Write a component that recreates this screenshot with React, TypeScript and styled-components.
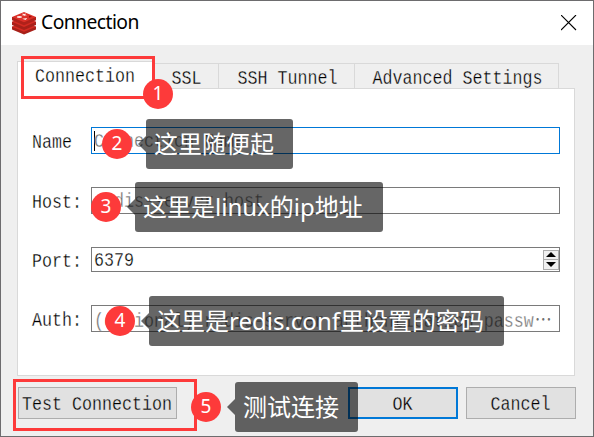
import React from "react";
import styled, { createGlobalStyle, css } from "styled-components";

const GlobalStyle = createGlobalStyle`
  * { box-sizing: border-box; }
  body { margin: 0; overflow: hidden; background: #efefef; }
`;

const Dialog = styled.div`
  position: relative;
  display: flex;
  flex-direction: column;
  width: 594px;
  height: 437px;
  border: 1px solid #6d6c6e;
  background: #efefef;
  color: #000;
`;

const TitleBar = styled.header`
  display: flex;
  align-items: center;
  height: 44px;
  flex: none;
  padding: 0 16px 0 10px;
  background: #fff;
`;

const Title = styled.h1`
  flex: 1;
  margin: 0 0 0 4px;
  font: 400 19.3px/42px "Noto Sans", "Open Sans", sans-serif;
  letter-spacing: -0.55px;
  padding-bottom: 2px;
`;

/* Tall fixed-pitch face: every character is 10px wide.
   A hairline stroke in the surface colour keeps the stems light. */
const Mono = styled.span<{ $muted?: boolean; $surface?: string }>`
  display: inline-block;
  flex: none;
  font: 400 16.667px/24px "Liberation Mono", "Noto Sans CJK SC", monospace;
  transform: scaleY(1.17);
  white-space: pre;
  color: ${(p) => (p.$muted ? "#707070" : "#000")};
  -webkit-text-stroke: 0.25px ${(p) => p.$surface ?? "#fff"};
`;

const Ellipsis = styled.span`
  display: inline-block;
  margin-left: 1px;
  font: 400 17px/24px "Noto Sans CJK SC", sans-serif;
  -webkit-text-stroke: 0;
`;

const Tabs = styled.nav`
  display: flex;
  align-items: flex-end;
  height: 27px;
  margin: 16px 0 0 16px;
  flex: none;
`;

const Tab = styled.div<{ $width: number; $active?: boolean }>`
  display: flex;
  justify-content: center;
  align-items: center;
  width: ${(p) => p.$width}px;
  height: 25px;
  padding: 5px 0 0 2px;
  border: 1px solid #d9d9d9;
  border-width: 1px 1px 0 0;
  ${(p) =>
    p.$active &&
    css`
      height: 28px;
      padding: 2px 0 0 0;
      margin-bottom: -1px;
      border-left-width: 1px;
      background: #fff;
      z-index: 1;
    `}
`;

const Panel = styled.main`
  display: flex;
  flex-direction: column;
  width: 558px;
  height: 288px;
  flex: none;
  margin-left: 16px;
  padding: 38px 14px 0 14px;
  border: 1px solid #d9d9d9;
  background: #fff;
`;

const Field = styled.label<{ $gap: number }>`
  display: flex;
  align-items: center;
  margin-bottom: ${(p) => p.$gap}px;
`;

const FieldName = styled.div`
  display: flex;
  width: 59px;
  padding-top: 2px;
  margin-bottom: -2px;
`;

const Input = styled.div<{ $focused?: boolean; $height?: number }>`
  display: flex;
  align-items: center;
  width: 469px;
  height: ${(p) => p.$height ?? 27}px;
  padding: 3px 0 0 2px;
  overflow: hidden;
  border: 1px solid ${(p) => (p.$focused ? "#0078d7" : "#7a7a7a")};
`;

const Caret = styled.i`
  width: 1px;
  height: 20px;
  margin: -3px -1px 0 0;
  flex: none;
  background: #000;
`;

const Spinner = styled.div`
  display: flex;
  flex-direction: column;
  width: 16px;
  height: 22px;
  margin: -3px 0 0 auto;
  padding: 1px 0;
`;

const Step = styled.div`
  display: flex;
  align-items: center;
  justify-content: center;
  height: 11px;
  border: 1px solid #acacac;
  background: #f0f0f0;
  & + & { margin-top: -1px; }
`;

const Footer = styled.footer`
  display: flex;
  gap: 8px;
  margin: 11px 17px 0;
`;

const Button = styled.button<{ $width?: number; $primary?: boolean }>`
  display: flex;
  align-items: center;
  justify-content: center;
  width: ${(p) => p.$width ?? 110}px;
  height: 32px;
  padding: 3px 1px 0 0;
  border: ${(p) => (p.$primary ? "2px solid #0078d7" : "1px solid #adadad")};
  background: #e1e1e1;
`;

const Spacer = styled.div`
  width: 155px;
`;

interface Spot {
  $x: number;
  $y: number;
}

/* Annotations float over the dialog at free positions */
const Frame = styled.div<Spot & { $w: number; $h: number }>`
  position: absolute;
  z-index: 2;
  left: ${(p) => p.$x - 1}px;
  top: ${(p) => p.$y - 1}px;
  width: ${(p) => p.$w}px;
  height: ${(p) => p.$h}px;
  border: 3px solid #fd3a3a;
`;

const Badge = styled.div<Spot>`
  position: absolute;
  z-index: 3;
  left: ${(p) => p.$x - 1}px;
  top: ${(p) => p.$y - 1}px;
  width: 30px;
  height: 30px;
  border-radius: 50%;
  background: #fd3a3a;
  color: #fff;
  font: 400 19px/29px "Noto Sans", "Open Sans", sans-serif;
  text-align: center;
`;

const Callout = styled.div<Spot & { $w: number }>`
  position: absolute;
  z-index: 3;
  left: ${(p) => p.$x - 1}px;
  top: ${(p) => p.$y - 1}px;
  width: ${(p) => p.$w}px;
  height: 50px;
  padding-left: 8px;
  border-radius: 3px;
  background: rgba(0, 0, 0, 0.6);
  color: #fff;
  font: 400 24px/50px "Noto Sans", "Noto Sans CJK SC", sans-serif;
  white-space: nowrap;
  &::before {
    content: "";
    position: absolute;
    left: -8px;
    top: 17px;
    border: 8px solid transparent;
    border-left-width: 0;
    border-right-color: rgba(0, 0, 0, 0.6);
  }
`;

const RedisLogo = () => (
  <svg width="26" height="24" viewBox="0 0 26 24">
    <path d="M1 15.5h24v3L13 23.4 1 18.5z" fill="#a82019" />
    <path d="M1 15.7 13 11l12 4.7-12 5.1z" fill="#d52b23" />
    <path d="M1 10.8h24v3.2l-12 5-12-5z" fill="#a82019" />
    <path d="M1 10.8 13 6l12 4.8-12 5.1z" fill="#d52b23" />
    <path d="M1 6h24v3.2l-12 5-12-5z" fill="#b0211a" />
    <path d="M1 6.1 13 1l12 5.1-12 5.2z" fill="#dc3028" />
    <path d="m11.3 2.6 1.8.5 1.8-.5-.6 1 1.6.6-2 .2-.7.7-.8-.8-1.8-.1 1.3-.6z" fill="#ffe9e7" />
    <ellipse cx="8.4" cy="5.9" rx="2.6" ry="1" fill="#ffe9e7" />
    <path d="m11.2 7.8 5-.7-1.5 2z" fill="#ffe9e7" />
    <path d="m18 4.5 3 1.2-3 1.1z" fill="#96120c" />
  </svg>
);

const CloseIcon = () => (
  <svg width="16" height="16" viewBox="0 0 16 16" stroke="#000" strokeWidth="1.1">
    <path d="m.5.5 15 15m0-15-15 15" transform="translate(-.5 -.5)" />
  </svg>
);

const Arrow = ({ down }: { down?: boolean }) => (
  <svg width="10" height="5" viewBox="0 0 10 5">
    <path d={down ? "M0 0h10L5 5z" : "M0 5h10L5 0z"} />
  </svg>
);

export default function App() {
  return (
    <>
      <GlobalStyle />
      <Dialog>
        <TitleBar>
          <RedisLogo />
          <Title>Connection</Title>
          <CloseIcon />
        </TitleBar>
        <Tabs>
          <Tab $width={136} $active><Mono>Connection</Mono></Tab>
          <Tab $width={66}><Mono $surface="#efefef">SSL</Mono></Tab>
          <Tab $width={136}><Mono $surface="#efefef">SSH Tunnel</Mono></Tab>
          <Tab $width={204}><Mono $surface="#efefef">Advanced Settings</Mono></Tab>
        </Tabs>
        <Panel>
          <Field $gap={33}>
            <FieldName><Mono>Name</Mono></FieldName>
            <Input $focused><Caret /><Mono $muted>Connection Name</Mono></Input>
          </Field>
          <Field $gap={33}>
            <FieldName><Mono>Host:</Mono></FieldName>
            <Input><Mono $muted>redis-server host</Mono></Input>
          </Field>
          <Field $gap={33}>
            <FieldName><Mono>Port:</Mono></FieldName>
            <Input $height={25}>
              <Mono>6379</Mono>
              <Spinner>
                <Step><Arrow /></Step>
                <Step><Arrow down /></Step>
              </Spinner>
            </Input>
          </Field>
          <Field $gap={0}>
            <FieldName><Mono>Auth:</Mono></FieldName>
            <Input>
              <Mono $muted>(optional) redis-server authentication passw<Ellipsis lang="zh-CN">⋯</Ellipsis></Mono>
            </Input>
          </Field>
        </Panel>
        <Footer>
          <Button $width={159}><Mono $surface="#e1e1e1">Test Connection</Mono></Button>
          <Spacer />
          <Button $primary><Mono $surface="#e1e1e1">OK</Mono></Button>
          <Button><Mono $surface="#e1e1e1">Cancel</Mono></Button>
        </Footer>

        <Frame $x={21} $y={56} $w={134} $h={43} />
        <Frame $x={13} $y={379} $w={184} $h={52} />
        <Badge $x={143} $y={79}>1</Badge>
        <Badge $x={102} $y={129}>2</Badge>
        <Badge $x={91} $y={192}>3</Badge>
        <Badge $x={105} $y={306}>4</Badge>
        <Badge $x={191} $y={392}>5</Badge>
        <Callout $x={146} $y={119} $w={147}>这里随便起</Callout>
        <Callout $x={135} $y={182} $w={248}>这里是linux的ip地址</Callout>
        <Callout $x={149} $y={296} $w={355}>这里是redis.conf里设置的密码</Callout>
        <Callout $x={235} $y={382} $w={123}>测试连接</Callout>
      </Dialog>
    </>
  );
}
